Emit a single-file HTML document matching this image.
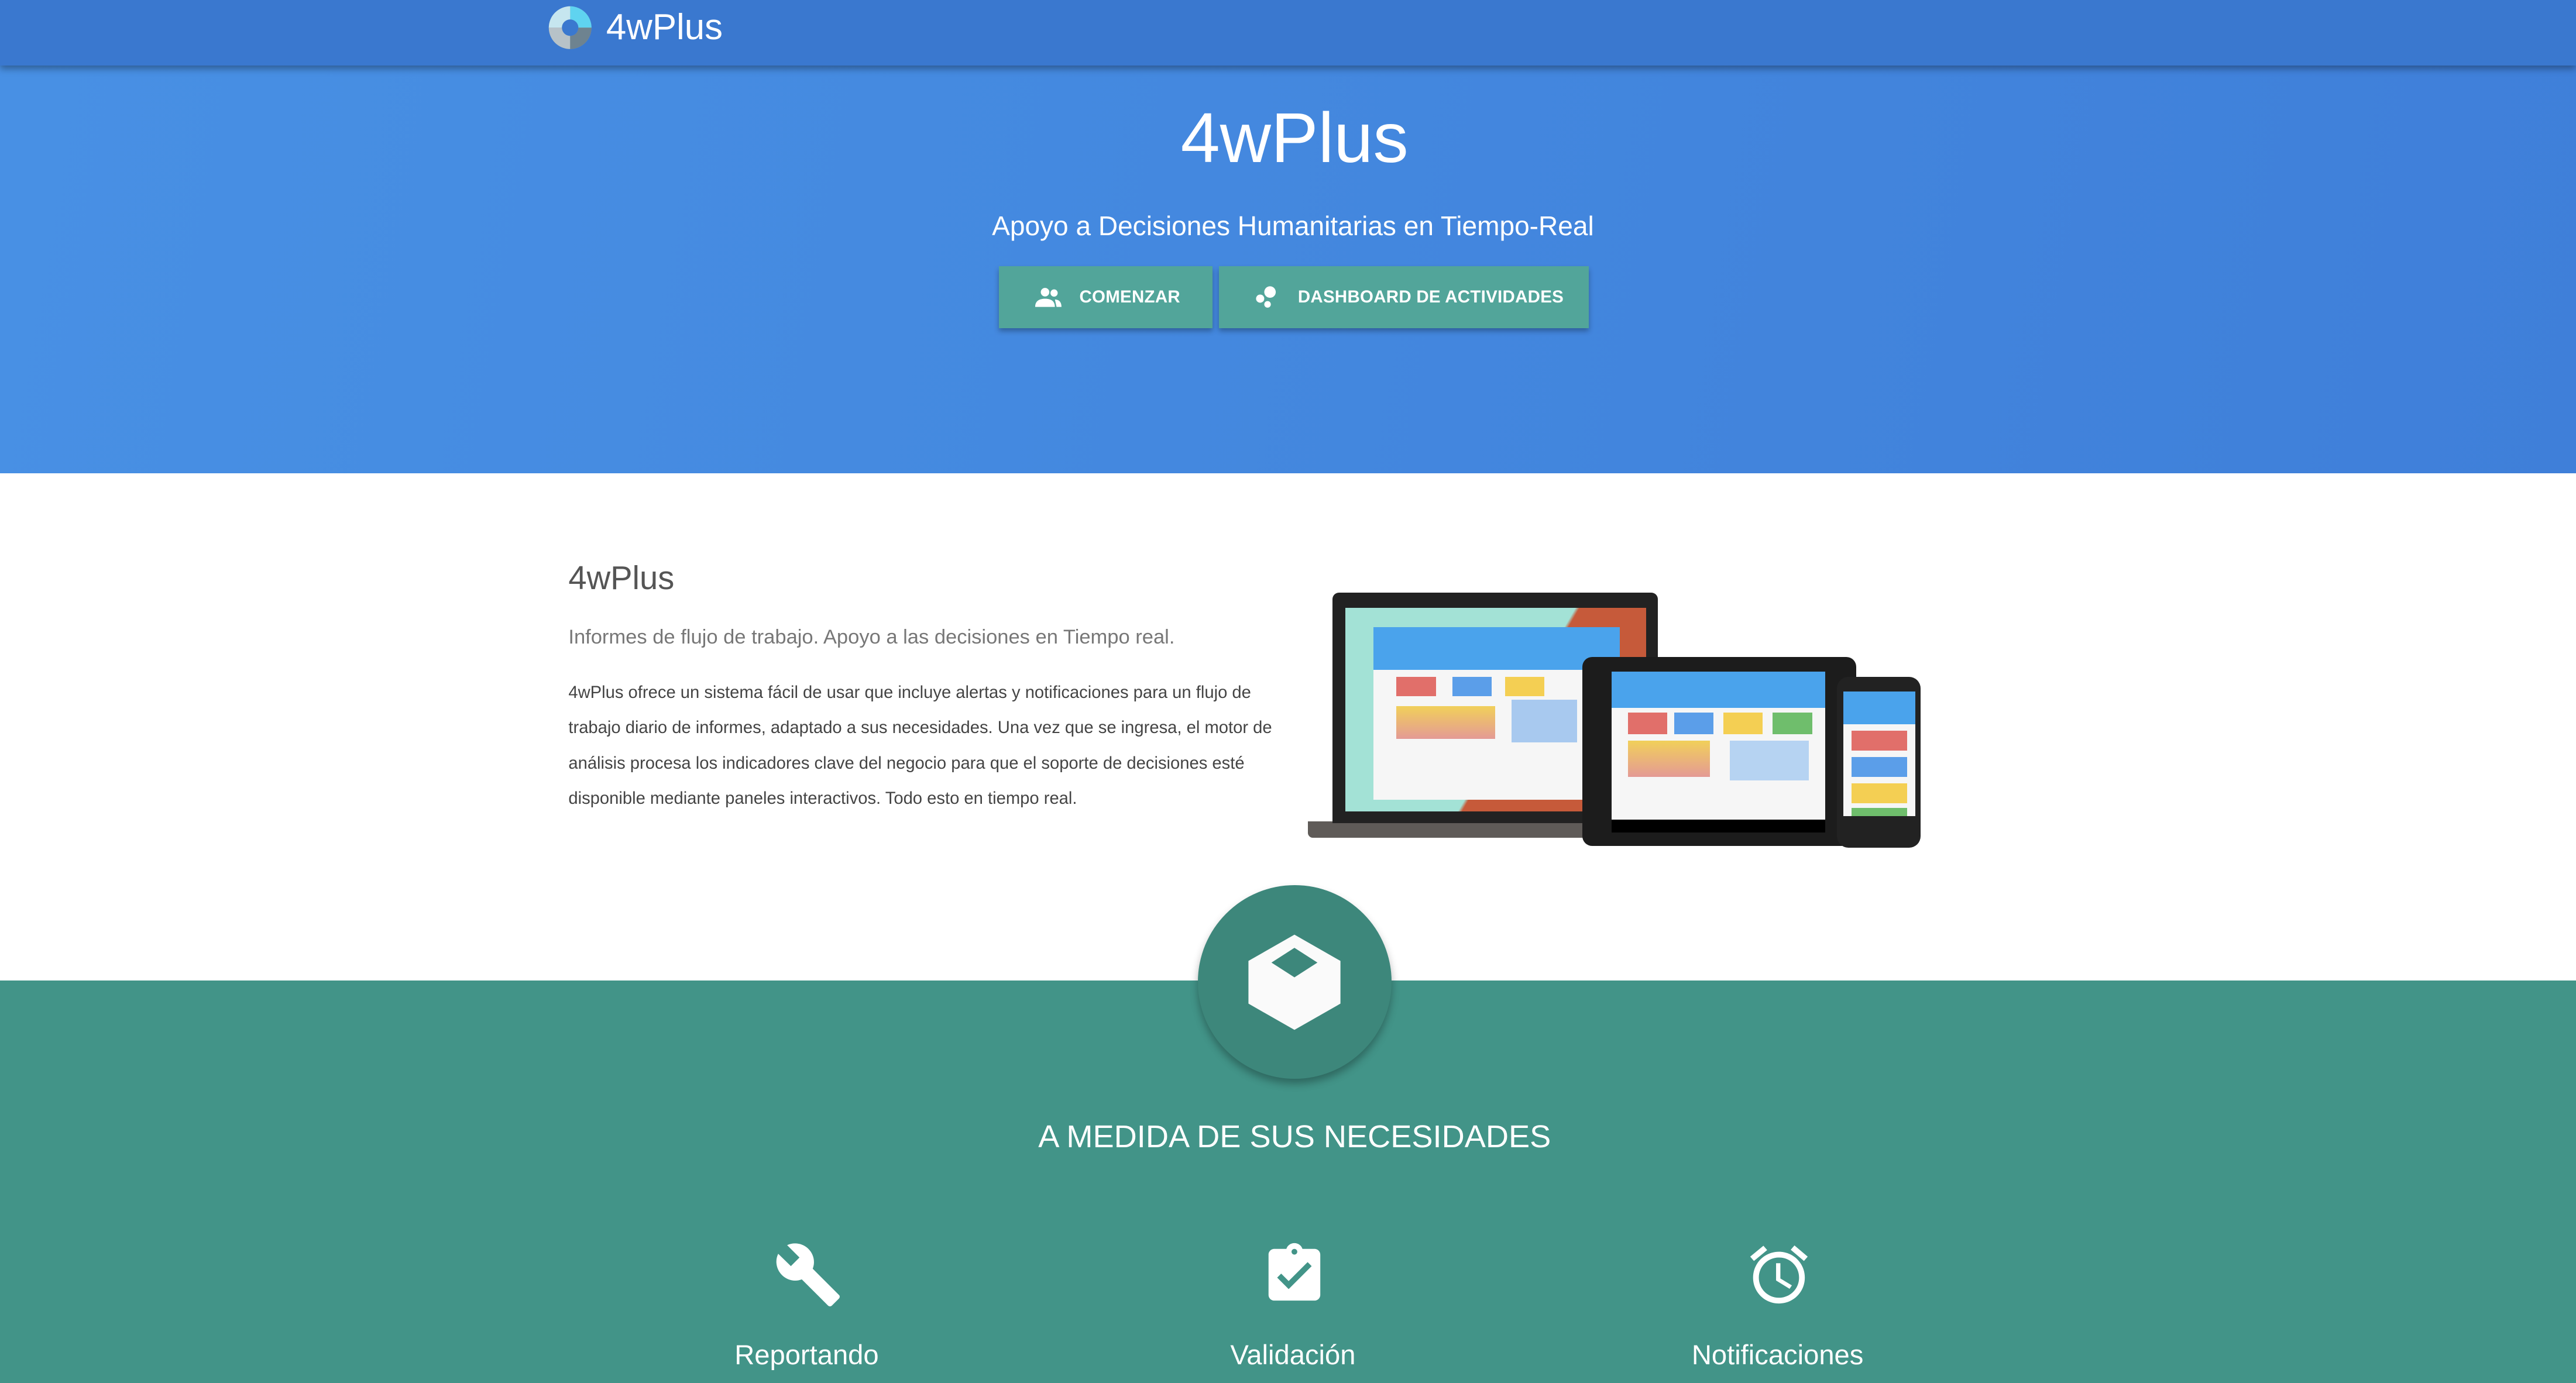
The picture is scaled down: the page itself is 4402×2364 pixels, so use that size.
<!DOCTYPE html>
<html><head><meta charset="utf-8"><style>
html,body{margin:0;padding:0;overflow:hidden}
body{width:4402px;height:2364px;background:#fff}
#w{zoom:2.8074;width:1568px;height:842px;position:relative;font-family:"Liberation Sans",sans-serif;overflow:hidden}
.abs{position:absolute}
#nav{left:0;top:0;width:1568px;height:40px;background:#3a78cf;box-shadow:0 2px 4px rgba(0,0,0,.35);z-index:2}
#hero{left:0;top:40px;width:1568px;height:248px;background:linear-gradient(100deg,#4890e4,#3f7fd9)}
.btn{top:162px;height:38px;background:#52a59a;box-shadow:0 2px 3px rgba(0,0,0,.3);color:#fff;font-size:10.5px;letter-spacing:.1px;line-height:38px;font-weight:bold}
#teal{left:0;top:597px;width:1568px;height:245px;background:#429488}
.feat{color:#fff;font-size:16.8px;text-align:center;width:200px}
p{margin:0}
</style></head><body><div id="w">
<div id="nav" class="abs">
 <svg class="abs" style="left:333px;top:3px" width="28" height="28" viewBox="0 0 28 28">
  <circle cx="14" cy="14" r="13" fill="#8fa7b5"/>
  <path d="M14 1A13 13 0 0 1 27 14L19 14A5 5 0 0 0 14 9Z" fill="#5fd3f0"/>
  <path d="M14 1A13 13 0 0 0 1 14L9 14A5 5 0 0 1 14 9Z" fill="#c6e6ef"/>
  <path d="M1 14A13 13 0 0 0 14 27L14 19A5 5 0 0 1 9 14Z" fill="#b7c2c8"/>
  <path d="M27 14A13 13 0 0 1 14 27L14 19A5 5 0 0 0 19 14Z" fill="#6e8390"/>
  <circle cx="14" cy="14" r="5" fill="#3a78cf"/>
 </svg>
 <div class="abs" style="left:369px;top:4px;color:#fff;font-size:22px">4wPlus</div>
</div>
<div id="hero" class="abs"></div>
<div class="abs" style="left:0;width:1576px;top:59px;text-align:center;color:#fff;font-size:43px">4wPlus</div>
<div class="abs" style="left:0;width:1574px;top:128px;text-align:center;color:#fff;font-size:16.4px">Apoyo a Decisiones Humanitarias en Tiempo-Real</div>
<div class="abs btn" style="left:608px;width:130px">
 <svg class="abs" style="left:22px;top:13px" width="16" height="12" viewBox="0 0 16 12"><circle cx="6" cy="3" r="2.6" fill="#fff"/><circle cx="11.5" cy="3.5" r="2.2" fill="#fff"/><path d="M0 12C0 8 3 7 6 7S12 8 12 12Z M12 7.5C14 7.5 16 8.5 16 12H13Z" fill="#fff"/></svg>
 <span class="abs" style="left:49px">COMENZAR</span></div>
<div class="abs btn" style="left:742px;width:225px">
 <svg class="abs" style="left:22px;top:12px" width="14" height="14" viewBox="0 0 14 14"><circle cx="9" cy="4" r="3.5" fill="#fff"/><circle cx="3" cy="8" r="2.5" fill="#fff"/><circle cx="7.5" cy="11.5" r="2" fill="#fff"/></svg>
 <span class="abs" style="left:48px">DASHBOARD DE ACTIVIDADES</span></div>

<div class="abs" style="left:346px;top:340px;color:#555;font-size:20px">4wPlus</div>
<div class="abs" style="left:346px;top:381px;color:#777;font-size:12.3px">Informes de flujo de trabajo. Apoyo a las decisiones en Tiempo real.</div>
<div class="abs" style="left:346px;top:411px;width:440px;color:#444;font-size:10.4px;line-height:21.5px">4wPlus ofrece un sistema fácil de usar que incluye alertas y notificaciones para un flujo de trabajo diario de informes, adaptado a sus necesidades. Una vez que se ingresa, el motor de análisis procesa los indicadores clave del negocio para que el soporte de decisiones esté disponible mediante paneles interactivos. Todo esto en tiempo real.</div>

<div class="abs" style="left:796px;top:500px;width:180px;height:10px;background:#5f5b58;border-radius:0 0 3px 3px"></div>
<div class="abs" style="left:811px;top:361px;width:198px;height:140px;background:#222;border-radius:4px 4px 0 0"></div>
<div class="abs" style="left:819px;top:370px;width:183px;height:124px;background:linear-gradient(120deg,#a3e2d6 55%,#c65a3a 56%)"></div>
<div class="abs" style="left:836px;top:382px;width:150px;height:105px;background:#f6f6f6"><div style="height:26px;background:#4aa3ec"></div>
 <div class="abs" style="left:14px;top:30px;width:24px;height:12px;background:#e16f6a"></div><div class="abs" style="left:48px;top:30px;width:24px;height:12px;background:#5b9ee9"></div><div class="abs" style="left:80px;top:30px;width:24px;height:12px;background:#f4cf53"></div>
 <div class="abs" style="left:14px;top:48px;width:60px;height:20px;background:linear-gradient(#f1d05a,#e49a95)"></div>
 <div class="abs" style="left:84px;top:44px;width:40px;height:26px;background:#a8c9ef"></div></div>
<div class="abs" style="left:963px;top:400px;width:167px;height:115px;background:#1c1c1c;border-radius:6px"></div>
<div class="abs" style="left:981px;top:409px;width:130px;height:90px;background:#f6f6f6"><div style="height:22px;background:#4aa3ec"></div>
 <div class="abs" style="left:10px;top:25px;width:24px;height:13px;background:#e16f6a"></div><div class="abs" style="left:38px;top:25px;width:24px;height:13px;background:#5b9ee9"></div><div class="abs" style="left:68px;top:25px;width:24px;height:13px;background:#f4cf53"></div><div class="abs" style="left:98px;top:25px;width:24px;height:13px;background:#6fbe6c"></div>
 <div class="abs" style="left:10px;top:42px;width:50px;height:22px;background:linear-gradient(#f1d05a,#e49a95)"></div>
 <div class="abs" style="left:72px;top:42px;width:48px;height:24px;background:#b6d3f2"></div></div>
<div class="abs" style="left:981px;top:499px;width:130px;height:8px;background:#000"></div>
<div class="abs" style="left:1118px;top:412px;width:51px;height:104px;background:#222;border-radius:7px"></div>
<div class="abs" style="left:1122px;top:421px;width:44px;height:76px;background:#f6f6f6"><div style="height:20px;background:#4aa3ec"></div>
 <div class="abs" style="left:5px;top:24px;width:34px;height:12px;background:#e16f6a"></div><div class="abs" style="left:5px;top:40px;width:34px;height:12px;background:#5b9ee9"></div><div class="abs" style="left:5px;top:56px;width:34px;height:12px;background:#f4cf53"></div><div class="abs" style="left:5px;top:71px;width:34px;height:5px;background:#6fbe6c"></div></div>

<div id="teal" class="abs"></div>
<div class="abs" style="left:729px;top:539px;width:118px;height:118px;border-radius:50%;background:#3d877b;box-shadow:0 3px 5px rgba(0,0,0,.3)"></div>
<svg class="abs" style="left:757px;top:567px" width="62" height="62" viewBox="0 0 62 62"><path d="M31 2L59 18V44L31 60L3 44V18Z" fill="#fafafa"/><path d="M31 10L45 19L31 28L17 19Z" fill="#3d877b"/></svg>
<div class="abs" style="left:0;width:1576px;top:681px;text-align:center;color:#fff;font-size:19.3px">A MEDIDA DE SUS NECESIDADES</div>

<svg class="abs" style="left:471px;top:755px" width="42" height="42" viewBox="0 0 24 24"><path fill="#fff" d="M22.7 19l-9.1-9.1c.9-2.3.4-5-1.5-6.9-2-2-5-2.4-7.4-1.3L9 6 6 9 1.6 4.7C.4 7.1.9 10.1 2.9 12.1c1.9 1.9 4.6 2.4 6.9 1.5l9.1 9.1c.4.4 1 .4 1.4 0l2.3-2.3c.5-.4.5-1.1.1-1.4z"/></svg>
<svg class="abs" style="left:767px;top:755px" width="42" height="42" viewBox="0 0 24 24"><path fill="#fff" d="M19 3h-4.2C14.4 1.8 13.3 1 12 1s-2.4.8-2.8 2H5c-1.1 0-2 .9-2 2v14c0 1.1.9 2 2 2h14c1.1 0 2-.9 2-2V5c0-1.1-.9-2-2-2zm-7 0c.55 0 1 .45 1 1s-.45 1-1 1-1-.45-1-1 .45-1 1-1zm-2 14l-4-4 1.4-1.4L10 14.2l6.6-6.6L18 9l-8 8z"/></svg>
<svg class="abs" style="left:1062px;top:755px" width="42" height="42" viewBox="0 0 24 24"><path fill="#fff" d="M22 5.7l-4.6-3.9-1.3 1.5 4.6 3.9L22 5.7zM7.9 3.4L6.6 1.9 2 5.7l1.3 1.5 4.6-3.8zM12.5 8H11v6l4.7 2.9.8-1.2-4-2.4V8zM12 4c-5 0-9 4-9 9s4 9 9 9 9-4 9-9-4-9-9-9zm0 16c-3.9 0-7-3.1-7-7s3.1-7 7-7 7 3.1 7 7-3.1 7-7 7z"/></svg>
<div class="abs feat" style="left:391px;top:815px">Reportando</div>
<div class="abs feat" style="left:687px;top:815px">Validación</div>
<div class="abs feat" style="left:982px;top:815px">Notificaciones</div>
</div></body></html>
